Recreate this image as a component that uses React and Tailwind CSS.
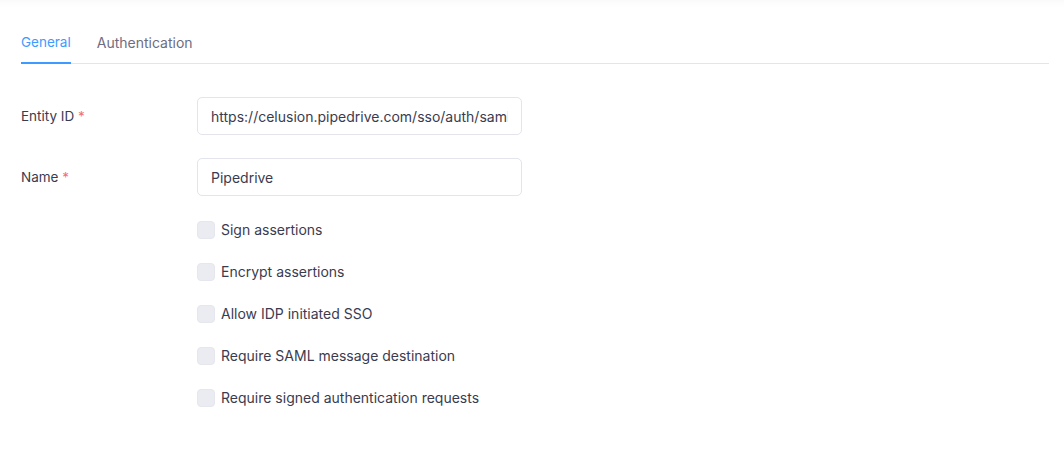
import { useState } from 'react';

const options = [
  'Sign assertions',
  'Encrypt assertions',
  'Allow IDP initiated SSO',
  'Require SAML message destination',
  'Require signed authentication requests',
];

function Field({ label, value }) {
  return (
    <div className="flex items-center">
      <label className="w-[176px] shrink-0 text-[13.5px] text-[#3b3b4f]">
        {label} <span className="text-[#f56c7c]">*</span>
      </label>
      <input
        readOnly
        value={value}
        className="w-[325px] h-[38px] rounded-[5px] border border-[#e3e4ec] bg-white px-[13px] text-[14px] text-[#3b3b4f] outline-none"
      />
    </div>
  );
}

export default function App() {
  const [tab, setTab] = useState('general');
  const [checked, setChecked] = useState({});

  return (
    <div
      className="min-h-[450px] bg-white pl-[21px] pr-[15px] pt-6 shadow-[inset_0_10px_10px_-10px_rgba(0,0,0,0.05)]"
      style={{ fontFamily: 'Inter, "Noto Sans", sans-serif' }}
    >
      {/* Tabs */}
      <div className="flex gap-[26px] border-b border-[#e2e4ee]">
        <button
          onClick={() => setTab('general')}
          className={`h-[40px] pb-[2px] -mb-px border-b-2 text-[13.5px] ${
            tab === 'general' ? 'border-[#3d9bff] text-[#3d9bff]' : 'border-transparent text-[#6d6d82]'
          }`}
        >
          General
        </button>
        <button
          onClick={() => setTab('auth')}
          className={`h-[40px] pb-[2px] -mb-px border-b-2 text-[14px] ${
            tab === 'auth' ? 'border-[#3d9bff] text-[#3d9bff]' : 'border-transparent text-[#6d6d82]'
          }`}
        >
          Authentication
        </button>
      </div>

      {/* Form */}
      <div className="mt-[33px] flex flex-col gap-[23px]">
        <Field label="Entity ID" value="https://celusion.pipedrive.com/sso/auth/saml2/metadata" />
        <Field label="Name" value="Pipedrive" />
      </div>

      <div className="ml-[176px] mt-[24px] flex flex-col gap-[22px]">
        {options.map((opt) => (
          <label key={opt} className="flex items-center gap-[6px] cursor-pointer leading-5">
            <span
              onClick={() => setChecked((c) => ({ ...c, [opt]: !c[opt] }))}
              className={`w-[18px] h-[18px] rounded-[4px] border ${
                checked[opt] ? 'bg-[#3d9bff] border-[#3d9bff]' : 'bg-[#ebecf2] border-[#e6e7ee]'
              }`}
            />
            <span className="text-[14px] text-[#3b3b4f]">{opt}</span>
          </label>
        ))}
      </div>
    </div>
  );
}
